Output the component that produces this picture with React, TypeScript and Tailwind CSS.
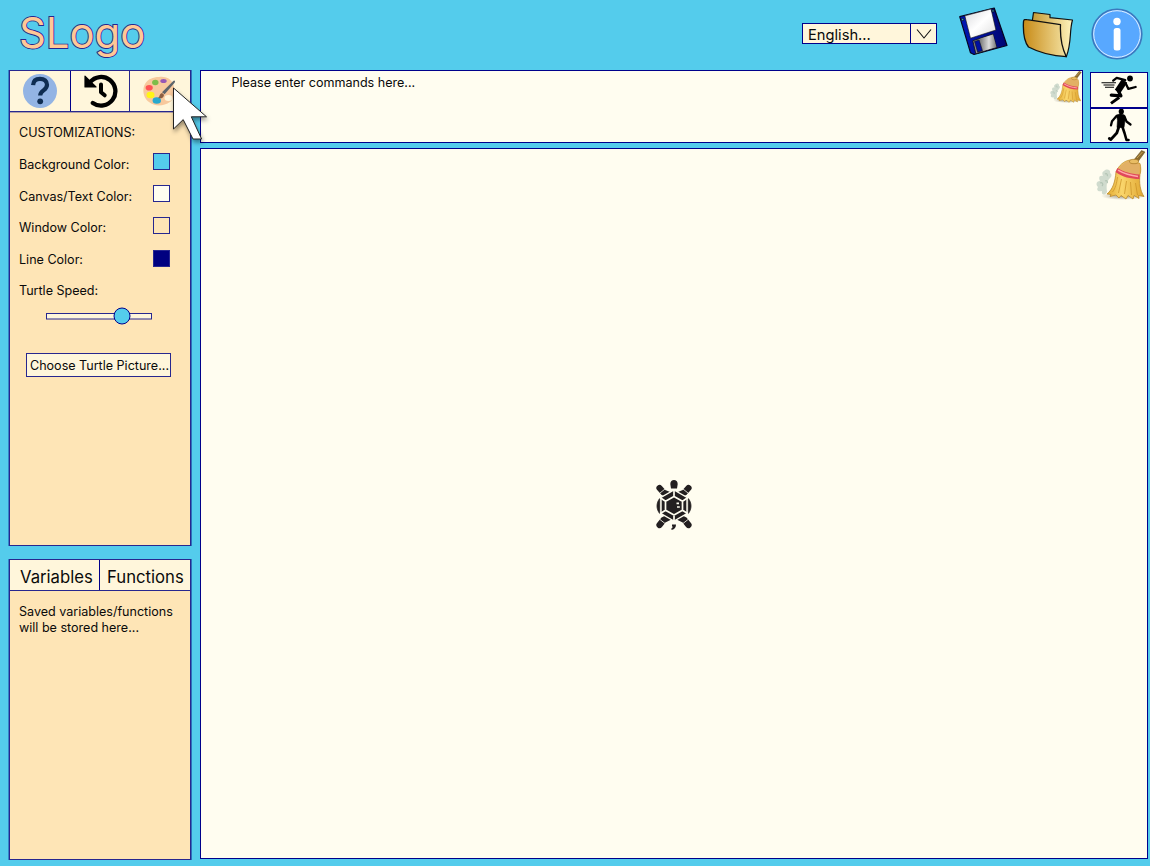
import React from "react";

function HelpIcon() {
  return (
    <svg width="34" height="34" viewBox="0 0 34 34">
      <circle cx="17" cy="17" r="17" fill="#93b4e4" />
      <path d="M10.1 11.2C10.3 6.8 13 4.8 17 4.8c4.300 0 7 2.300 7 6 0 5.900-6.800 5.300-6.800 10.800" fill="none" stroke="#0f2d52" strokeWidth="4.200" />
      <circle cx="17.200" cy="27.300" r="2.900" fill="#0f2d52" />
    </svg>
  );
}

function HistoryIcon() {
  return (
    <svg width="34" height="34" viewBox="0 0 34 34">
      <path d="M6 8.200A14.300 14.300 0 1 1 8.800 28.900" fill="none" stroke="#000" strokeWidth="4.300" strokeLinecap="round" />
      <path d="M1 2.200V13h11z" fill="#000" stroke="#000" strokeWidth="1.200" strokeLinejoin="round" />
      <path d="M17 10.500v7.800l3.700 3" fill="none" stroke="#000" strokeWidth="4" strokeLinecap="round" strokeLinejoin="round" />
    </svg>
  );
}

function PaletteIcon() {
  return (
    <svg width="33" height="31" viewBox="0 0 33 31">
      <path d="M16 1C24 0 30 4 31 11c1 4 0 12-4 15-6 4-15 5-21 0C0 22-1 13 2 8 5 3 10 1 16 1z" fill="#f8c99d" />
      <ellipse cx="25.500" cy="22" rx="4" ry="3" fill="#fff6db" />
      <ellipse cx="12.300" cy="6.500" rx="3.200" ry="2.700" fill="#7ebd48" />
      <ellipse cx="20.500" cy="5" rx="3.200" ry="2.100" fill="#9858b5" />
      <ellipse cx="6.200" cy="11.700" rx="3.600" ry="2.800" fill="#ff5454" />
      <ellipse cx="7.500" cy="19" rx="4" ry="3.200" fill="#fff515" />
      <ellipse cx="13.800" cy="24.500" rx="4.200" ry="3.200" fill="#29a9ce" />
      <path d="M15 22c2-1 1-4 4-5l2 1.700c0 3-3 4.300-6 3.300z" fill="#8c6043" />
      <path d="M19 16.200 30 5.200c1.500-1.400 2.700 0 1.600 1.500L21.600 18.300z" fill="#5d656b" />
    </svg>
  );
}

function CursorIcon() {
  return (
    <svg width="42" height="60" viewBox="0 0 42 60" className="drop-shadow-[1px_3px_2px_rgba(0,0,0,0.4)]">
      <path d="M2.500 2v41l9.700-9.400L22 53h8.600L20.300 30.800h15.200z" fill="#fff" stroke="#222" strokeWidth="1" />
    </svg>
  );
}

function FloppyIcon() {
  return (
    <svg width="50" height="50" viewBox="0 0 50 50">
      <defs>
        <linearGradient id="label" x1="0" y1="0" x2="1" y2="1">
          <stop offset="0" stopColor="#d8d8dc" /><stop offset=".5" stopColor="#fff" /><stop offset="1" stopColor="#ddd" />
        </linearGradient>
        <linearGradient id="shutter"><stop offset="0" stopColor="#777" /><stop offset=".55" stopColor="#ddd" /><stop offset="1" stopColor="#777" /></linearGradient>
        <linearGradient id="disk"><stop offset="0" stopColor="#0018b8" /><stop offset="1" stopColor="#000570" /></linearGradient>
      </defs>
      <path d="M.7 9.700 35.200 1 48 38.500 15 47.500l-3.500-1.700z" fill="url(#disk)" stroke="#050520" strokeWidth="1.200" strokeLinejoin="round" />
      <path d="M5.800 8.800 32 2l4.900 21L11.500 31.200z" fill="url(#label)" stroke="#111" strokeWidth=".6" />
      <path d="M13.800 33.800 34 27.200l3.600 13.300-20.800 6.200z" fill="#8d8e96" stroke="#111" strokeWidth=".8" />
      <path d="M20.800 31.700 34 27.500l3.400 12.500-13.300 4z" fill="url(#shutter)" />
      <path d="m15.500 34.500 4.700-1.500 3.200 10.700-4.700 1.500z" fill="#0010a0" stroke="#111" strokeWidth=".6" />
      <circle cx="3.600" cy="12.500" r="1.200" fill="#4298bb" stroke="#001" strokeWidth=".7" />
      <circle cx="34" cy="3.900" r="1.200" fill="#4298bb" stroke="#001" strokeWidth=".7" />
    </svg>
  );
}

function FolderIcon() {
  return (
    <svg width="52" height="48" viewBox="0 0 52 48">
      <defs>
        <linearGradient id="front"><stop offset="0" stopColor="#c88b17" /><stop offset="1" stopColor="#f3e1a0" /></linearGradient>
        <linearGradient id="back"><stop offset="0" stopColor="#c79a33" /><stop offset="1" stopColor="#fff4be" /></linearGradient>
      </defs>
      <path d="M10.300 10 11.500 1.500 28 3.500v3.200L50.500 9C47 21 50 31 44.300 45.700L12 36z" fill="url(#back)" stroke="#111" strokeWidth="1.200" strokeLinejoin="round" />
      <path d="M1.500 10.500C1.800 8.500 3 8.300 5 8.700l33.500 5C38 25 40 37 44.300 45.700 31 45 18 42 6.500 36 2 30 1 19 1.500 10.500z" fill="url(#front)" stroke="#111" strokeWidth="1.300" strokeLinejoin="round" />
    </svg>
  );
}

function InfoIcon() {
  return (
    <svg width="52" height="52" viewBox="0 0 52 52">
      <circle cx="26" cy="26" r="24.800" fill="#58a8ff" stroke="#3c78bd" strokeWidth="1.600" />
      <circle cx="26" cy="26" r="23.300" fill="none" stroke="#e2f0ff" strokeWidth="1" />
      <circle cx="26" cy="13.500" r="3.700" fill="#fff" />
      <rect x="22.700" y="20" width="6.800" height="22.500" rx="2.500" fill="#fff" />
    </svg>
  );
}

function BroomIcon({ size, id }: { size: number; id: string }) {
  return (
    <svg width={size} height={size} viewBox="0 0 50 50">
      <defs>
        <linearGradient id={id}>
          <stop offset="0" stopColor="#e3ab32" /><stop offset=".4" stopColor="#fad66c" /><stop offset="1" stopColor="#e0a630" />
        </linearGradient>
        <radialGradient id={`${id}-shadow`}>
          <stop offset="0" stopColor="#77705c" stopOpacity=".7" /><stop offset="1" stopColor="#77705c" stopOpacity="0" />
        </radialGradient>
      </defs>
      <ellipse cx="27" cy="46" rx="22" ry="4" fill={`url(#${id}-shadow)`} />
      <path d="M8 21c3-3 7-1 6 2 2 1 2 3 0 5-3 3-4 7-3 14-2 4-6 3-5-1-4 1-6-1-4-4-3-3-1-6 2-6-2-4 0-6 3-5-1-2-1-4 1-5z" fill="#d0dbce" />
      <path d="M9 24c2-1 3 1 2 2m-7 7c2-1 4 1 2 3m3-5c2-1 3 1 2 2" fill="none" stroke="#b3c4b4" strokeWidth="1.200" />
      <path d="M37 11 45.500.5 49 2 41 13z" fill="#8b6b2d" stroke="#604a1c" strokeWidth=".5" />
      <path d="m41 8 5.500-6" stroke="#c9a356" strokeWidth="1" />
      <path d="M34 10c-6 1-11 5-14 12-1 10-3 17-9 22l4 .5-1 2 6-1.500 3 3 2-2.500 5 3.500 2-3.500 5 3.500 1-3.500 5 3-.5-3 5.500 1c-4-6-5-14-4-22 1-3 1-7 0-11z" fill={`url(#${id})`} stroke="#b68222" strokeWidth=".7" strokeLinejoin="round" />
      <path d="M34 10.500c-5 1-9 4-12 8.500 7 4 14 6 21 6 1-3 1-8 .6-11z" fill="#e2b065" />
      <path d="M21.500 18c7 4 13 6 22 6.500V29c-9 0-17-2-24-7z" fill="#e0485a" />
      <path d="M22 20.200c6 3.500 12 5.500 20 6.200" fill="none" stroke="#ffa9a8" strokeWidth="1.500" />
      <path d="M21.500 27c-1 7-2 11-5 15m9-13-3 14m8-12-2 13m6-12 1 13m4-12 2 12" fill="none" stroke="#c98f24" strokeWidth=".7" />
      <ellipse cx="38" cy="11.500" rx="4.500" ry="2.200" fill="#e9bd64" stroke="#a57625" strokeWidth=".7" />
    </svg>
  );
}

function RunIcon() {
  return (
    <svg width="38" height="30" viewBox="0 0 38 30">
      <circle cx="30" cy="3.500" r="2.900" />
      <g fill="none" stroke="#000" strokeLinecap="round" strokeLinejoin="round">
        <path d="m13.200 5.600 3.500-2.800 8.500 2.400" strokeWidth="2.300" />
        <path d="M24.500 6 17.500 16.500" strokeWidth="6.500" strokeLinecap="butt" />
        <path d="m25.500 8 2.900 5.900 7.200-1.900" strokeWidth="2.300" />
        <path d="m17.500 14.500 3.400 6.300-9.600-.6" strokeWidth="3.300" />
        <path d="m18 23.300-5.800 4.200" strokeWidth="3" strokeLinecap="square" />
        <path d="M1.500 7.700h14.500M3.500 10h11M5 12.300h9" strokeWidth="1.100" strokeLinecap="butt" />
      </g>
    </svg>
  );
}

function WalkIcon() {
  return (
    <svg width="25" height="33" viewBox="0 0 25 33">
      <ellipse cx="14.300" cy="2.500" rx="2.600" ry="2.900" />
      <path d="m9.500 6 4-1.200 4 1.200.7 4-1.200 8.500h-7l.5-7z" stroke="#000" strokeWidth=".6" strokeLinejoin="round" />
      <g fill="none" stroke="#000" strokeLinecap="round" strokeLinejoin="round">
        <path d="m9.500 7-4.500 5.300-1 4" strokeWidth="2.300" />
        <path d="m17.500 7.500 2 5 4 3" strokeWidth="2.200" />
        <path d="m12 17.500-2.200 6.500-6 6.500-1.500-1" strokeWidth="2.800" />
        <path d="m15.300 17.500 2.200 6.500 2 7h2" strokeWidth="2.600" />
      </g>
    </svg>
  );
}

function TurtleIcon() {
  return (
    <svg width="36" height="50" viewBox="0 0 36 50">
      <g fill="none" stroke="#231f20" strokeWidth="6.200" strokeLinecap="round">
        <path d="m3.500 8 4 4.500 6 2.500M32.500 8l-4 4.500-6 2.500M3.500 45l4-5 6-3M32.500 45l-4-5-6-3" />
      </g>
      <path d="m4 13 5-4M32 13l-5-4M4 39.500l5 4M32 39.500l-5 4M14 5.500h8" fill="none" stroke="#fffdf0" strokeWidth=".8" />
      <path d="M14.300 4C14.300 1.500 16 0 18 0s3.700 1.500 3.700 4L21 8.500h-6z" fill="#231f20" />
      <path d="M16 44.500h4c0 3-1.200 4.700-4.300 5.500l-.5-1.300c1.400-.7 1.800-1.700.8-2.700z" fill="#231f20" />
      <path d="m18 10 13 7.300v16.200L18 41 5 33.500V17.300z" fill="#231f20" stroke="#fffdf0" strokeWidth="1.400" />
      <path d="M3.700 18.500c-3.600 4.500-3.600 10.500 0 15zM32.300 18.500c3.600 4.500 3.600 10.500 0 15z" fill="#231f20" stroke="#231f20" strokeWidth=".8" />
      <path d="m18 16.500 8.500 4.700v9L18 35l-8.500-4.800v-9zM18 16.500V9M26.500 21.200l5.500-3.700M26.500 30.200l5.500 3.500M18 35v7M9.500 30.200 4 33.700M9.500 21.200 4 17.500" fill="none" stroke="#fffdf0" strokeWidth="1.700" />
      <path d="M20.500 22.500h2.500v1.700h-2.500zM21 26.200h2.800v1.500H21z" fill="#fffdf0" />
    </svg>
  );
}

const swatches = [
  { label: "Background Color:", style: "mb-[7px] bg-[#54ccec]" },
  { label: "Canvas/Text Color:", style: "mb-[6px] bg-[#fffdf0]" },
  { label: "Window Color:", style: "mb-[4px] bg-[#fee5b6]" },
  { label: "Line Color:", style: "mb-[2px] bg-[#000080]" },
];

function Header() {
  return (
    <header className="flex h-[70px] shrink-0 items-start">
      <h1 className="ml-[19px] mt-[7px] text-[41.800px] leading-[52px] text-[#ffc896] [-webkit-text-stroke:1.800px_#26268f] [paint-order:stroke_fill]">SLogo</h1>
      <div className="ml-auto mt-[23px] flex h-[21px] w-[135px] border border-[#00008b] bg-[#fff6db]">
        <span className="flex-1 pl-[5px] text-[14.700px] leading-[22px]">English...</span>
        <span className="flex w-[26px] items-center justify-center border-l border-[#00008b]">
          <svg width="16" height="10" viewBox="0 0 16 10"><path d="m1 .5 7 8.500 7-8.500" fill="none" stroke="#111" strokeWidth="1.100" /></svg>
        </span>
      </div>
      <button className="ml-[22px] mt-[7px]"><FloppyIcon /></button>
      <button className="ml-[13px] mt-[11px]"><FolderIcon /></button>
      <button className="ml-[17px] mr-[7px] mt-[8px]"><InfoIcon /></button>
    </header>
  );
}

function CustomizationPanel() {
  return (
    <section className="flex h-[476px] flex-col border border-[#27278f] bg-[#fee5b6] shadow-[-1px_0_0_rgba(0,0,128,0.35),1px_0_0_rgba(0,0,128,0.45)]">
      <div className="flex h-[41px] shrink-0 border-b border-[#27278f] bg-[#fff6db] shadow-[0_1px_0_rgba(0,0,128,0.3)]">
        <button className="flex w-[61px] items-center justify-center border-r border-[#00008b]"><HelpIcon /></button>
        <button className="flex w-[59px] items-center justify-center border-r border-[#27278f] pl-[2px]"><HistoryIcon /></button>
        <button className="relative flex flex-1 items-center pl-[13px]">
          <PaletteIcon />
          <span className="pointer-events-none absolute left-[41px] top-[15px] z-10"><CursorIcon /></span>
        </button>
      </div>
      <div className="flex flex-col pl-[9px] pr-[20px] pt-[5px] text-[12.550px]">
        <p className="h-[32px] leading-[32px]">CUSTOMIZATIONS:</p>
        {swatches.map((s) => (
          <div key={s.label} className="flex h-[31.500px] items-center justify-between">
            <span className="leading-[20px] pt-px">{s.label}</span>
            <span className={`h-[17px] w-[17px] border border-[#27278f] ${s.style}`} />
          </div>
        ))}
        <p className="h-[31.500px] leading-[31.500px]">Turtle Speed:</p>
      </div>
      <svg className="ml-[36px] mt-[0.500px]" width="107" height="18" viewBox="0 0 107 18">
        <rect x=".5" y="6.500" width="105" height="5.500" fill="#fff6db" stroke="#27278f" />
        <circle cx="76" cy="9" r="8" fill="#54ccec" stroke="#00008b" />
      </svg>
      <button className="ml-[16px] mt-[28px] h-[24px] w-[145px] whitespace-nowrap border border-[#27278f] bg-[#fff6db] pl-[3px] text-left text-[12.550px] leading-[23px]">Choose Turtle Picture...</button>
    </section>
  );
}

function StoragePanel() {
  return (
    <section className="mt-[13px] flex h-[301px] flex-col border border-[#27278f] bg-[#fee5b6] shadow-[-1px_0_0_rgba(0,0,128,0.35),1px_0_0_rgba(0,0,128,0.45)]">
      <div className="flex h-[31px] shrink-0 border-b border-[#27278f] bg-[#fff6db] text-[16.700px] leading-[34px]">
        <button className="w-[90px] border-r border-[#00008b] pl-[10px] text-left">Variables</button>
        <button className="flex-1 pl-[7px] text-left">Functions</button>
      </div>
      <p className="pl-[9px] pt-[13px] text-[12.550px] leading-[16px]">Saved variables/functions<br />will be stored here...</p>
    </section>
  );
}

export default function App() {
  return (
    <main className="flex h-[866px] w-[1150px] flex-col overflow-hidden bg-[#54ccec] font-['Inter',sans-serif] text-[#0a0a0a]">
      <Header />
      <div className="flex pl-[9px]">
        <aside className="relative z-10 w-[182px] shrink-0"><CustomizationPanel /><StoragePanel /></aside>
        <div className="ml-[9px] flex w-[948px] flex-col">
          <div className="flex justify-between">
            <div className="flex h-[73px] w-[883px] justify-between border border-[#00008b] bg-[#fffdf0]">
              <p className="pl-[30.500px] pt-[4px] text-[12.550px] leading-[16px]">Please enter commands here...</p>
              <button className="h-[32px]"><BroomIcon size={32} id="broomSmall" /></button>
            </div>
            <div className="mt-[2px] flex w-[58px] flex-col">
              <button className="flex h-[36px] items-center justify-center border border-[#00008b] bg-[#fffdf0]"><RunIcon /></button>
              <button className="flex h-[35px] items-center justify-center border border-[#00008b] bg-[#fffdf0]"><WalkIcon /></button>
            </div>
          </div>
          <div className="mt-[5px] flex h-[711px] justify-between border border-[#00008b] bg-[#fffdf0]">
            <span className="ml-[455px] mt-[331px] h-[50px]"><TurtleIcon /></span>
            <button className="mr-[1px] mt-px h-[50px]"><BroomIcon size={50} id="broomLarge" /></button>
          </div>
        </div>
      </div>
    </main>
  );
}
